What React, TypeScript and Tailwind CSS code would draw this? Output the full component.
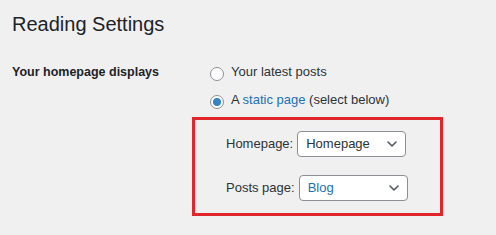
import React from "react";

function Radio({ checked }: { checked?: boolean }) {
  return (
    <span className="flex h-[14px] w-[14px] shrink-0 items-center justify-center rounded-full border border-[#8c8f94] bg-white mt-[3px]">
      {checked && <span className="h-[8px] w-[8px] rounded-full bg-[#3582c4]" />}
    </span>
  );
}

function Select({ value, blue }: { value: string; blue?: boolean }) {
  return (
    <div className="flex h-[26px] w-[109px] items-center justify-between rounded-[4px] border border-[#8c8f94] bg-white pl-[8px] pr-[8px]">
      <span className={blue ? "text-[#2271b1]" : "text-[#2c3338]"}>{value}</span>
      <svg width="10" height="6" viewBox="0 0 10 6" fill="none">
        <path d="M1 1l4 4 4-4" stroke="#50575e" strokeWidth="1.6" strokeLinecap="round" strokeLinejoin="round" />
      </svg>
    </div>
  );
}

export default function App() {
  return (
    <div className="min-h-screen bg-[#f0f0f1] pl-[12px] pt-[14px] font-['Liberation_Sans',Arial,sans-serif] text-[#1d2327]">
      <h1 className="text-[20px] leading-[20px] font-normal">Reading Settings</h1>
      <div className="mt-[24px] flex">
        <div className="w-[180px] text-[12.5px] font-bold leading-[28px]">Your homepage displays</div>
        <div className="flex flex-col text-[13px]">
          <div className="flex h-[28px] items-center gap-[7px] pl-[18px]">
            <Radio />
            <span className="text-[#2c3338]">Your latest posts</span>
          </div>
          <div className="flex h-[28px] items-center gap-[7px] pl-[18px]">
            <Radio checked />
            <span className="text-[#2c3338]">
              A <span className="text-[#2271b1]">static page</span> (select below)
            </span>
          </div>
          <div className="mt-[3px] flex h-[99px] w-[251px] flex-col gap-[18px] border-[3px] border-[#e0262b] pl-[31px] pt-[11px]">
            <div className="flex items-center gap-[4px] text-[#2c3338]">
              <span>Homepage:</span>
              <Select value="Homepage" />
            </div>
            <div className="flex items-center gap-[4px] text-[#2c3338]">
              <span>Posts page:</span>
              <Select value="Blog" blue />
            </div>
          </div>
        </div>
      </div>
    </div>
  );
}
